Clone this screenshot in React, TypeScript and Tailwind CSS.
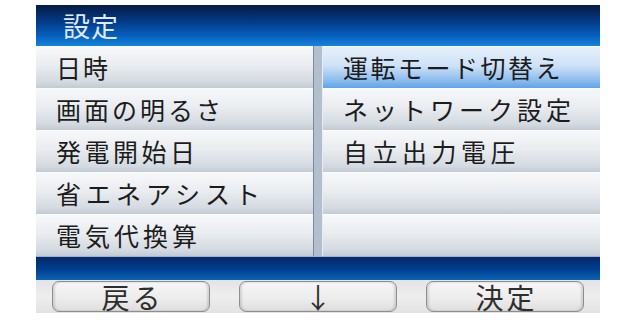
import React from "react";

type Item = { label: string; track: string };

const leftItems: Item[] = [
  { label: "日時", track: "tracking-[2px]" },
  { label: "画面の明るさ", track: "tracking-[3px]" },
  { label: "発電開始日", track: "tracking-[3.5px]" },
  { label: "省エネアシスト", track: "tracking-[5px]" },
  { label: "電気代換算", track: "tracking-[4px]" },
];
const rightItems: Item[] = [
  { label: "運転モード切替え", track: "tracking-[2.5px]" },
  { label: "ネットワーク設定", track: "tracking-[4px]" },
  { label: "自立出力電圧", track: "tracking-[4.5px]" },
  { label: "", track: "" },
  { label: "", track: "" },
];

function Row({ item, selected }: { item: Item; selected?: boolean }) {
  return (
    <div
      className={
        "h-[42px] flex items-center pl-[20px] border-t border-t-[#fbfcfd] " +
        (selected
          ? "bg-[linear-gradient(to_bottom,#e6f0fb_0%,#cfe2f7_45%,#8fbdee_80%,#5fa3ea_100%)]"
          : "bg-[linear-gradient(to_bottom,#f7f8fa_0%,#e9ecf0_45%,#d4dae1_85%,#c3cad3_100%)]")
      }
    >
      <span className={"text-[25px] leading-none text-[#1c1c1c] whitespace-nowrap " + item.track}>{item.label}</span>
    </div>
  );
}

function Btn({ label }: { label: string }) {
  return (
    <div className="w-[158px] h-[31px] mt-[1px] rounded-[7px] border border-[#8e8e8e] bg-[linear-gradient(to_bottom,#f6f6f6_0%,#ececec_60%,#dedede_100%)] shadow-[inset_2px_0_2px_rgba(0,0,0,0.12),inset_-2px_0_2px_rgba(0,0,0,0.12)] flex items-center justify-center">
      <span className="text-[28px] leading-none text-[#2e2e2e] tracking-[3px] pl-[3px]">{label}</span>
    </div>
  );
}

export default function App() {
  return (
    <div
      className="w-[630px] h-[322px] bg-white pt-[5px] pl-[36px] overflow-hidden"
      style={{ fontFamily: '"Noto Sans CJK JP", "Noto Sans", sans-serif' }}
    >
      <div className="w-[564px] flex flex-col">
        <div className="h-[41px] flex items-center pl-[27px] bg-[linear-gradient(to_bottom,#061c44_0%,#033a86_40%,#0760bd_75%,#1484dc_100%)]">
          <span className="text-[27px] leading-none tracking-[1px] text-[#dfe8f5]">設定</span>
        </div>
        <div className="flex h-[210px]">
          <div className="w-[277px] flex flex-col">
            {leftItems.map((it) => (
              <Row key={it.label} item={it} />
            ))}
          </div>
          <div className="w-[10px] border-l border-l-[#7a8aa0] border-r border-r-[#e6edf5] bg-[#b3bfcd]" />
          <div className="w-[277px] flex flex-col">
            {rightItems.map((it, i) => (
              <Row key={i} item={it} selected={i === 0} />
            ))}
          </div>
        </div>
        <div className="h-[24px] border-t border-t-[#9fb2c8] bg-[linear-gradient(to_bottom,#05286a_0%,#003d8c_50%,#0a62b4_100%)]" />
        <div className="h-[33px] flex justify-between px-[16px] bg-[linear-gradient(to_bottom,#e4e4e4_0%,#eeeeee_50%,#e2e2e2_100%)]">
          <Btn label="戻る" />
          <Btn label="↓" />
          <Btn label="決定" />
        </div>
      </div>
    </div>
  );
}
